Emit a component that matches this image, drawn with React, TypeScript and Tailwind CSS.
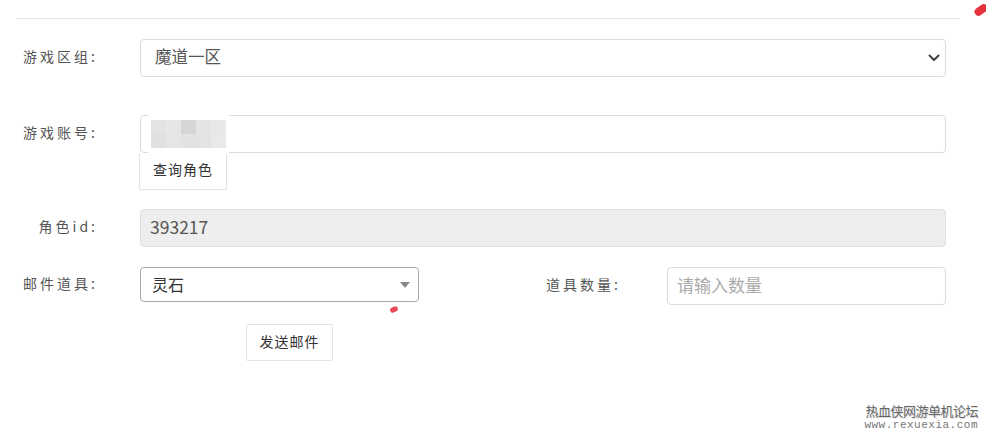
import React from 'react';

const font = { fontFamily: '"Noto Sans CJK SC", "Noto Sans", sans-serif' };

function Label({ text }: { text: string }) {
  return (
    <div className="w-[82px] shrink-0 pb-[3px] text-right text-[14px] tracking-[3px] text-[#555]">
      {text}
    </div>
  );
}

// mosaic block that hides the account name
function Mosaic() {
  const cells = [
    '#e3e3e3', '#e6e6e6', '#d6d6d6', '#e4e4e4', '#e8e8e8',
    '#e0e0e0', '#e5e5e5', '#e2e2e2', '#e3e3e3', '#e9e9e9',
  ];
  return (
    <div className="absolute left-[7px] top-[-1px] grid grid-cols-5 bg-white px-[3px] py-[5px]">
      {cells.map((c, i) => (
        <div key={i} className="h-[14px] w-[15px]" style={{ backgroundColor: c }} />
      ))}
    </div>
  );
}

export default function App() {
  return (
    <div className="relative h-[436px] w-[986px] overflow-hidden bg-white" style={font}>
      {/* red brush marks */}
      <div className="absolute right-[-2px] top-[6px] h-[8px] w-[14px] -rotate-[35deg] rounded-full bg-[#e8323c]" />
      <div className="absolute left-[390px] top-[307px] h-[5px] w-[8px] -rotate-[25deg] rounded-full bg-[#ec4a5a]" />

      <div className="ml-[16px] mr-[26px] mt-[18px] border-t border-[#e5e5e5]" />

      {/* 游戏区组 */}
      <div className="mt-[20px] flex items-center pl-[16px]">
        <Label text="游戏区组:" />
        <div className="ml-[42px] flex h-[38px] w-[806px] items-center justify-between rounded-[4px] border border-[#dcdcdc] pb-[3px] pl-[14px] pr-[5px] text-[16.5px] text-[#555]">
          <span>魔道一区</span>
          <svg width="12" height="8" viewBox="0 0 12 8" fill="none" className="mt-[3px]">
            <path d="M1.5 1.5 L6 6 L10.5 1.5" stroke="#444" strokeWidth="2" strokeLinecap="round" strokeLinejoin="round" />
          </svg>
        </div>
      </div>

      {/* 游戏账号 */}
      <div className="mt-[38px] flex pl-[16px]">
        <div className="flex h-[38px] items-center">
          <Label text="游戏账号:" />
        </div>
        <div className="ml-[42px] flex flex-col items-start">
          <div className="relative h-[38px] w-[806px] rounded-[4px] border border-[#dcdcdc]">
            <Mosaic />
          </div>
          <button className="ml-[-1px] h-[37px] w-[88px] rounded-[2px] border border-t-0 border-[#e2e2e2] bg-white pb-[3px] text-[14px] tracking-[1px] text-[#333]">
            查询角色
          </button>
        </div>
      </div>

      {/* 角色id */}
      <div className="mt-[19px] flex items-center pl-[16px]">
        <Label text="角色id:" />
        <div className="ml-[42px] flex h-[38px] w-[806px] items-center rounded-[4px] border border-[#e0e0e0] bg-[#eeeeee] pb-[2px] pl-[9px] text-[17.5px] text-[#555]">
          393217
        </div>
      </div>

      {/* 邮件道具 / 道具数量 */}
      <div className="mt-[20px] flex items-start pl-[16px]">
        <div className="flex h-[36px] items-center">
          <Label text="邮件道具:" />
        </div>
        <div className="ml-[42px] flex h-[35px] w-[279px] items-center justify-between rounded-[4px] border border-[#a9a9a9] pb-[2px] pl-[11px] pr-[8px] text-[16px] text-[#333]">
          <span>灵石</span>
          <svg width="10" height="6" viewBox="0 0 10 6" className="mt-[2px]">
            <path d="M0 0 L10 0 L5 6 Z" fill="#888" />
          </svg>
        </div>
        <div className="ml-[120px] flex h-[38px] items-center">
          <Label text="道具数量:" />
        </div>
        <div className="ml-[46px] flex h-[38px] w-[279px] items-center rounded-[4px] border border-[#dcdcdc] pb-[3px] pl-[9px] text-[17px] text-[#aaa]">
          请输入数量
        </div>
      </div>

      <div className="mt-[19px] flex pl-[246px]">
        <button className="h-[37px] w-[87px] rounded-[2px] border border-[#e2e2e2] bg-white pb-[3px] text-[14px] tracking-[1px] text-[#333]">
          发送邮件
        </button>
      </div>

      {/* watermark */}
      <div className="absolute bottom-[5px] right-[8px] flex flex-col items-end">
        <span
          className="text-[13px] leading-[15px] tracking-[-0.5px] text-[#666]"
          style={{ textShadow: '1px 1px 0 #ddd' }}
        >
          热血侠网游单机论坛
        </span>
        <span
          className="mt-[2px] text-[11px] leading-[11px] tracking-[0.5px] text-[#777]"
          style={{ fontFamily: '"Liberation Mono", monospace' }}
        >
          www.rexuexia.com
        </span>
      </div>
    </div>
  );
}
